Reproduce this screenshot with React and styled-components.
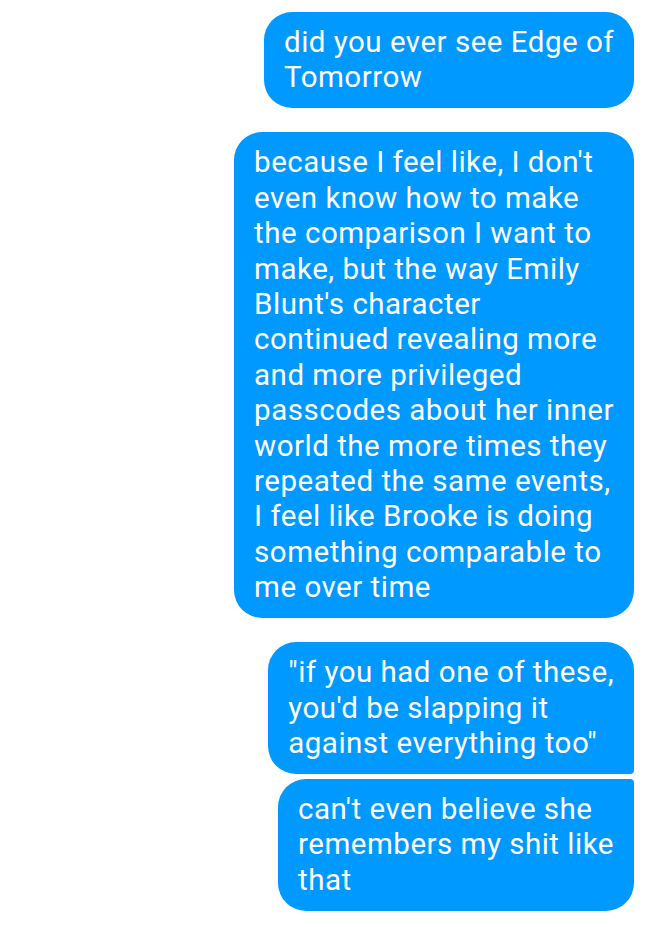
import React from 'react'
import styled, { createGlobalStyle } from 'styled-components'

const GlobalStyle = createGlobalStyle`
    body {
        margin: 0;
        background: #ffffff;
        font-family: Roboto, "Noto Sans", sans-serif;
    }
`

const Thread = styled.div`
    display: flex;
    flex-direction: column;
    align-items: flex-end;
    padding: 12px 14px 0 0;
`

const Group = styled.div`
    display: flex;
    flex-direction: column;
    align-items: flex-end;
    gap: 5px;
    margin-bottom: 24px;
`

const Bubble = styled.div`
    background: #0099ff;
    color: #ffffff;
    font-size: 29.5px;
    letter-spacing: 0.5px;
    line-height: 35.4px;
    padding: 13px 20px 12.5px 20px;
    border-radius: ${p => p.$corners || '28px'};
    white-space: nowrap;
`

const messages = [
    [
        { lines: ['did you ever see Edge of', 'Tomorrow'] }
    ],
    [
        {
            lines: [
                "because I feel like, I don't",
                'even know how to make',
                'the comparison I want to',
                'make, but the way Emily',
                "Blunt's character",
                'continued revealing more',
                'and more privileged',
                'passcodes about her inner',
                'world the more times they',
                'repeated the same events,',
                'I feel like Brooke is doing',
                'something comparable to',
                'me over time'
            ]
        }
    ],
    [
        {
            lines: ['"if you had one of these,', "you'd be slapping it", 'against everything too"'],
            corners: '28px 28px 4px 28px'
        },
        {
            lines: ["can't even believe she", 'remembers my shit like', 'that'],
            corners: '28px 4px 28px 28px'
        }
    ]
]

const App = () => {
    return (
        <React.Fragment>
            <GlobalStyle />
            <Thread>
                {messages.map((group, i) => (
                    <Group key={i}>
                        {group.map((m, j) => (
                            <Bubble key={j} $corners={m.corners}>
                                {m.lines.map((l, k) => (
                                    <React.Fragment key={k}>
                                        {l}
                                        {k < m.lines.length - 1 && <br />}
                                    </React.Fragment>
                                ))}
                            </Bubble>
                        ))}
                    </Group>
                ))}
            </Thread>
        </React.Fragment>
    )
}

export default App
